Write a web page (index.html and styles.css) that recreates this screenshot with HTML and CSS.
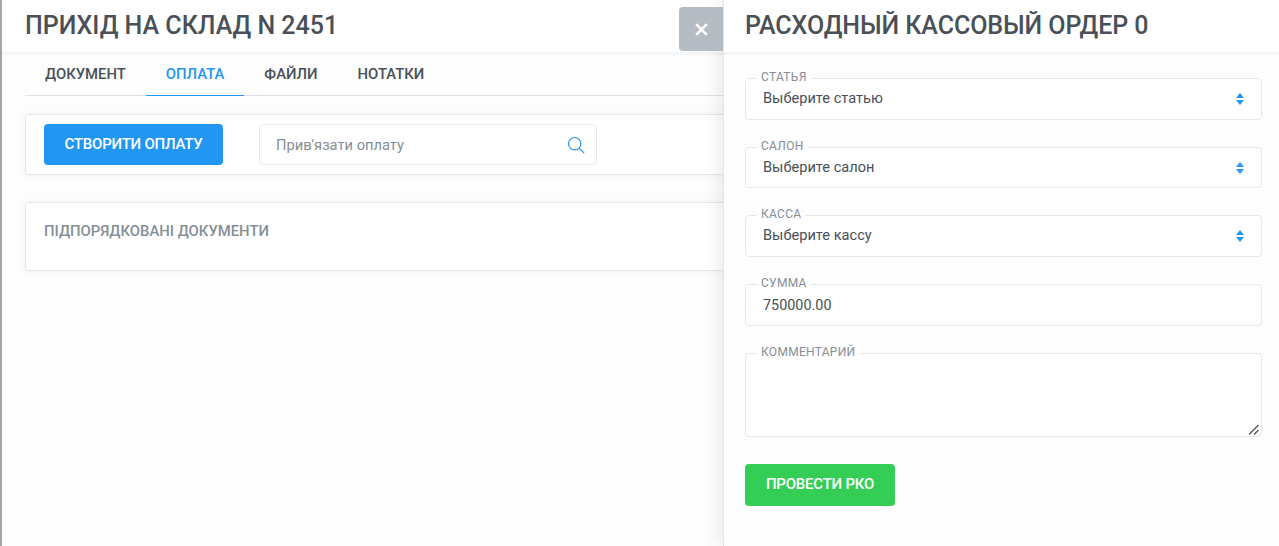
FILE: index.html
```html
<!DOCTYPE html>
<html lang="uk">
<head>
<meta charset="utf-8">
<title>Прихід на склад</title>
<link rel="stylesheet" href="styles.css">
</head>
<body>
<main class="page">
  <header class="page-head"><h1 class="title">ПРИХІД НА СКЛАД N 2451</h1></header>
  <div class="page-body">
    <nav class="tabs">
      <a class="tab">ДОКУМЕНТ</a>
      <a class="tab active">ОПЛАТА</a>
      <a class="tab">ФАЙЛИ</a>
      <a class="tab">НОТАТКИ</a>
    </nav>
    <section class="card card-pay">
      <button class="btn btn-blue">СТВОРИТИ ОПЛАТУ</button>
      <div class="search">
        <span class="search-text">Прив'язати оплату</span>
        <svg class="search-icon" width="18" height="18" viewBox="0 0 18 18" fill="none" stroke="#2196f3" stroke-width="1.2"><circle cx="7.7" cy="7.7" r="6.2"/><path d="M12.2 12.2l4.9 4.9"/></svg>
      </div>
    </section>
    <section class="card card-sub">
      <h2 class="sub-title">ПІДПОРЯДКОВАНІ ДОКУМЕНТИ</h2>
    </section>
  </div>
</main>
<aside class="drawer">
  <button class="close" aria-label="Закрыть">
    <svg width="13" height="13" viewBox="0 0 13 13" stroke="#fff" stroke-width="2.6" fill="none"><path d="M1.2 1.2l10.6 10.6M11.8 1.2L1.2 11.8"/></svg>
  </button>
  <header class="drawer-head"><h1 class="title">РАСХОДНЫЙ КАССОВЫЙ ОРДЕР 0</h1></header>
  <form class="form">
    <fieldset class="field field-select"><legend>СТАТЬЯ</legend><span class="value">Выберите статью</span>
      <svg class="arrows" width="8" height="12" viewBox="0 0 8 12" fill="#2196f3"><path d="M4 0l4 5H0zM0 7h8l-4 5z"/></svg></fieldset>
    <fieldset class="field field-select"><legend>САЛОН</legend><span class="value">Выберите салон</span>
      <svg class="arrows" width="8" height="12" viewBox="0 0 8 12" fill="#2196f3"><path d="M4 0l4 5H0zM0 7h8l-4 5z"/></svg></fieldset>
    <fieldset class="field field-select"><legend>КАССА</legend><span class="value">Выберите кассу</span>
      <svg class="arrows" width="8" height="12" viewBox="0 0 8 12" fill="#2196f3"><path d="M4 0l4 5H0zM0 7h8l-4 5z"/></svg></fieldset>
    <fieldset class="field field-select"><legend>СУММА</legend><span class="value value-sum">750000.00</span></fieldset>
    <fieldset class="field field-area"><legend>КОММЕНТАРИЙ</legend><textarea class="area"></textarea>
      <svg class="grip" width="11" height="11" viewBox="0 0 11 11" fill="none" stroke="#555" stroke-width="1.3"><path d="M1 10.5L10.5 1M6 10.5L10.5 6"/></svg></fieldset>
    <button class="btn btn-green" type="button">ПРОВЕСТИ РКО</button>
  </form>
</aside>
</body>
</html>
```
FILE: styles.css
```css
* { box-sizing: border-box; }
html, body { margin: 0; height: 100%; overflow: hidden; }
body {
  background: #fdfdfd;
  font-family: Roboto, "Liberation Sans", sans-serif;
  color: #495057;
  border-left: 2px solid #a3a5a8;
}
.page { margin-right: 556px; overflow: visible; }
.page-head {
  height: 55px;
  margin-right: -556px;
  padding: 11px 0 0 23px;
  background: #fff;
  border-bottom: 3px solid #f4f5f6;
}
.title {
  margin: 0;
  font-size: 25px;
  line-height: 30px;
  font-weight: 500;
  color: #495057;
}
.page-body { padding: 0 0 0 23px; }
.tabs {
  display: flex;
  height: 41px;
  border-bottom: 1px solid #dee2e6;
}
.tab {
  padding: 10px 20px 0;
  font-size: 14.85px;
  line-height: 18px;
  font-weight: 500;
  color: #495057;
}
.tab.active {
  color: #2196f3;
  border-bottom: 1px solid #2196f3;
  height: 41px;
}
.card {
  background: #fff;
  border: 1px solid #e6e7e9;
  border-right: 0;
  border-radius: 4px 0 0 4px;
  box-shadow: 0 1px 8px rgba(0, 0, 0, .05);
}
.card-pay {
  display: flex;
  gap: 36px;
  height: 61px;
  margin-top: 18px;
  padding: 9px 0 0 18px;
}
.btn {
  display: block;
  border: 0;
  border-radius: 4px;
  color: #fff;
  font-family: inherit;
  font-size: 15px;
  font-weight: 500;
  padding: 0 0 2px;
  letter-spacing: -.22px;
}
.btn-blue { width: 179px; height: 41px; background: #2196f3; }
.search {
  display: flex;
  align-items: center;
  justify-content: space-between;
  width: 338px;
  height: 41px;
  padding: 0 11px 0 16px;
  border: 1px solid #e9eaec;
  border-radius: 4px;
}
.search-text { font-size: 14.7px; color: #868e96; }
.search-icon { display: block; }
.card-sub {
  height: 69px;
  margin-top: 27px;
  padding: 18px 0 0 18px;
}
.sub-title {
  margin: 0;
  font-size: 14.85px;
  line-height: 20px;
  font-weight: 500;
  color: #868e96;
}
.drawer {
  position: absolute;
  top: 0;
  right: 0;
  bottom: 0;
  width: 556px;
  background: #fdfdfd;
  border-left: 1px solid #e4e4e9;
  box-shadow: -6px 0 14px rgba(0, 0, 0, .07);
}
.drawer-head {
  height: 55px;
  padding: 11px 0 0 21px;
  background: #fff;
  border-bottom: 3px solid #f4f5f6;
}
.drawer-head .title { letter-spacing: -.08px; }
.close {
  position: absolute;
  top: 7px;
  left: -45px;
  display: flex;
  align-items: center;
  justify-content: center;
  width: 44px;
  height: 44px;
  padding: 0;
  border: 0;
  border-radius: 4px 0 0 4px;
  background: #b5bcc4;
}
.form { padding: 16px 17px 0 21px; }
.field {
  position: relative;
  margin: 0 0 20px;
  padding: 0 17px;
  min-width: 0;
  border: 1px solid #e6e7e9;
  border-radius: 4px;
  background: #fff;
}
.field legend {
  margin-left: -6px;
  padding: 0 4px 3px;
  font-size: 12px;
  line-height: 12px;
  color: #868e96;
  letter-spacing: .3px;
}
.field-select { height: 48.7px; }
.value {
  display: block;
  font-size: 14.6px;
  line-height: 20px;
  margin-top: 2px;
  color: #495057;
}
.value-sum { margin-top: 4px; font-size: 14.4px; }
.arrows {
  position: absolute;
  top: 7px;
  right: 17px;
}
.field-area { height: 91px; padding: 0 0 0 17px; }
.area {
  display: block;
  width: calc(100% + 17px);
  height: 75px;
  margin-left: -17px;
  border: 0;
  background: transparent;
  outline: 0;
  resize: none;
}
.grip {
  position: absolute;
  right: 2px;
  bottom: 1px;
  pointer-events: none;
}
.btn-green {
  width: 150px;
  height: 42px;
  margin-top: 27px;
  background: #34ce57;
}
```
